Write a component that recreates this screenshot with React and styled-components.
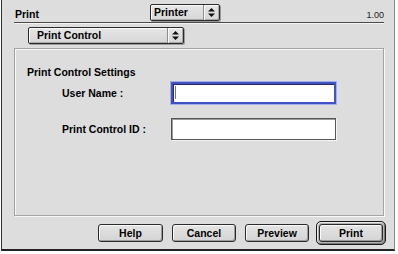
import React from 'react';
import styled, { createGlobalStyle } from 'styled-components';

const GlobalStyle = createGlobalStyle`
  html, body {
    margin: 0;
    padding: 0;
    background: #ffffff;
  }
  body {
    font-family: 'Liberation Sans', Arial, sans-serif;
    font-size: 10.5px;
    color: #000;
  }
`;

const Window = styled.div`
  box-sizing: border-box;
  margin-left: 1px;
  width: 394px;
  height: 251px;
  background: #dddddd;
  border-left: 1px solid #333;
  border-right: 1px solid #8a8a8a;
  border-bottom: 2px solid #222;
  padding: 4px 10px 3px 12px;
  display: flex;
  flex-direction: column;
`;

const Header = styled.div`
  display: flex;
  align-items: flex-end;
  padding-bottom: 1px;
  border-bottom: 1px solid #4a4a4a;
  box-shadow: 0 1px 0 #f4f4f4;
`;

const Title = styled.div`
  width: 135px;
  padding-left: 1px;
  font-weight: bold;
  line-height: 13px;
`;

const Version = styled.div`
  margin-left: auto;
  font-size: 9px;
  line-height: 11px;
  color: #222;
  padding-bottom: 0;
`;

const Popup = styled.div`
  box-sizing: border-box;
  width: ${(p) => p.$w}px;
  height: 17px;
  margin-left: ${(p) => p.$ml || 0}px;
  display: flex;
  align-items: stretch;
  border: 1px solid #2a2a2a;
  border-radius: 2px;
  background: linear-gradient(#e6e6e6, #d6d6d6);
  box-shadow: inset 1px 1px 0 #fafafa, inset -1px -1px 0 #a8a8a8, 1px 1px 0 #9a9a9a;
  font-weight: bold;
  line-height: 15px;
`;

const PopupLabel = styled.div`
  flex: 1;
  padding-left: ${(p) => p.$pl}px;
  white-space: nowrap;
`;

const PopupArrow = styled.div`
  width: 15px;
  display: flex;
  align-items: center;
  justify-content: center;
  border-left: 1px solid #8e8e8e;
  box-shadow: inset 1px 0 0 #fafafa;
`;

const Arrows = () => (
  <svg width="7" height="9" viewBox="0 0 7 9">
    <path d="M3.5 0 L7 3.5 L0 3.5 Z M0 5.5 L7 5.5 L3.5 9 Z" fill="#111" />
  </svg>
);

const Group = styled.div`
  box-sizing: border-box;
  margin-top: 4px;
  height: 168px;
  border: 1px solid #a4a4a4;
  box-shadow: inset 1px 1px 0 #f8f8f8, 1px 1px 0 #f8f8f8;
  padding: 17px 0 0 12px;
`;

const GroupTitle = styled.div`
  font-weight: bold;
  line-height: 13px;
`;

const Row = styled.div`
  display: flex;
  align-items: center;
  margin-top: ${(p) => p.$mt}px;
  padding-left: 35px;
`;

const Label = styled.div`
  width: 109px;
  font-weight: bold;
  line-height: 13px;
  white-space: nowrap;
`;

const Field = styled.div`
  position: relative;
  box-sizing: border-box;
  width: 165px;
  height: 22px;
  background: #fff;
  border: ${(p) => (p.$focused ? '2px solid #4052c4' : '1px solid #555')};
  box-shadow: ${(p) =>
    p.$focused
      ? '0 0 0 1px #a3afea, inset 1px 1px 0 #2a2a60'
      : 'inset 1px 1px 0 #9a9a9a, 1px 1px 0 #f6f6f6'};

  ${(p) =>
    p.$focused &&
    `
    &::after {
      content: "";
      position: absolute;
      left: 2px;
      top: 2px;
      width: 1px;
      height: 13px;
      background: #777;
    }
  `}
`;

const ButtonRow = styled.div`
  display: flex;
  align-items: center;
  justify-content: flex-end;
  margin-top: 5px;
  margin-right: -2px;
  height: 24px;
`;

const Button = styled.div`
  box-sizing: border-box;
  width: ${(p) => p.$w || 64}px;
  height: 18px;
  margin-right: ${(p) => p.$mr || 0}px;
  display: flex;
  align-items: center;
  justify-content: center;
  border: 1px solid #2a2a2a;
  border-radius: 3px;
  background: linear-gradient(#e4e4e4, #d4d4d4);
  box-shadow: inset 1px 1px 0 #fbfbfb, inset -1px -1px 0 #9c9c9c;
  font-weight: bold;
  line-height: 13px;
`;

const DefaultRing = styled.div`
  box-sizing: border-box;
  height: 24px;
  padding: 2px;
  border: 1px solid #1a1a1a;
  border-radius: 5px;
  background: #b4b4b4;
  box-shadow: inset 1px 1px 0 #e8e8e8, inset -1px -1px 0 #7a7a7a;
  display: flex;
`;

export default function App() {
  return (
    <>
      <GlobalStyle />
      <Window>
        <Header>
          <Title>Print</Title>
          <Popup $w={70}>
            <PopupLabel $pl={3}>Printer</PopupLabel>
            <PopupArrow>
              <Arrows />
            </PopupArrow>
          </Popup>
          <Version>1.00</Version>
        </Header>
        <Popup $w={156} $ml={14} style={{ marginTop: 4 }}>
          <PopupLabel $pl={8}>Print Control</PopupLabel>
          <PopupArrow>
            <Arrows />
          </PopupArrow>
        </Popup>
        <Group>
          <GroupTitle>Print Control Settings</GroupTitle>
          <Row $mt={3}>
            <Label>User Name :</Label>
            <Field $focused />
          </Row>
          <Row $mt={14}>
            <Label>Print Control ID :</Label>
            <Field />
          </Row>
        </Group>
        <ButtonRow>
          <Button $w={65} $mr={9}>Help</Button>
          <Button $mr={9}>Cancel</Button>
          <Button $mr={7}>Preview</Button>
          <DefaultRing>
            <Button>Print</Button>
          </DefaultRing>
        </ButtonRow>
      </Window>
    </>
  );
}
